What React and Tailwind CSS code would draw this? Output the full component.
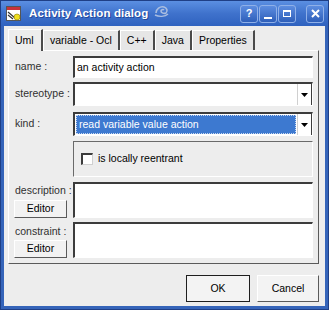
import React from "react";

// Raised / sunken borders in the old Qt style
const raised = "border-t border-l border-t-white border-l-white border-b border-r border-b-[#5a5a5a] border-r-[#5a5a5a]";
const sunken = "border-t-2 border-l-2 border-t-[#3c3c3c] border-l-[#3c3c3c] border-b border-r border-b-white border-r-white";

const TitleButton = ({ children, className = "" }) => (
  <div
    className={
      "w-[18px] h-[18px] rounded-[3px] border border-[#8fb0e8] bg-gradient-to-b from-[#5d8de0] to-[#2e5fba] flex items-center justify-center text-white " +
      className
    }
  >
    {children}
  </div>
);

const Arrow = () => (
  <div className="w-[15px] h-full bg-white border-l border-l-[#d0d0d0] border-r border-r-[#3c3c3c] flex items-center justify-center">
    <svg width="7" height="6" viewBox="0 0 7 6">
      <path d="M0 1h7L3.5 5z" fill="#000" />
    </svg>
  </div>
);

const Label = ({ children }) => (
  <div className="w-[59px] shrink-0 whitespace-nowrap text-[10.5px] text-[#303030] pl-[1px]">{children}</div>
);

const EditorButton = () => (
  <div className={"w-[53px] h-[18px] bg-[#f2f2f2] flex items-center justify-center text-[10.5px] text-black " + raised}>
    Editor
  </div>
);

export default function App() {
  const tabs = ["variable - Ocl", "C++", "Java", "Properties"];
  return (
    <div className="w-[329px] h-[310px] bg-[#3564b9] border border-[#1f3f86] flex flex-col font-['Liberation_Sans',Arial,sans-serif] select-none">
      {/* Barre de titre */}
      <div className="h-[25px] shrink-0 flex items-center bg-gradient-to-b from-[#5b8fe2] via-[#3f72cc] to-[#2f62bf] pl-[5px] pr-[4px]">
        <svg width="15" height="15" viewBox="0 0 15 15" className="shrink-0">
          <rect x="0.5" y="0.5" width="14" height="14" fill="#fff" stroke="#555" />
          <rect x="1" y="1" width="13" height="3" fill="#c8323a" />
          <path d="M2 6l7 6M2 9l5 4" stroke="#333" strokeWidth="1.2" />
          <circle cx="11" cy="11" r="3" fill="#f0e020" stroke="#8a7a00" strokeWidth="0.6" />
        </svg>
        <span className="ml-[8px] whitespace-nowrap text-white font-bold text-[11.5px] tracking-[0.1px] [text-shadow:1px_1px_0_#24479a]">
          Activity Action dialog
        </span>
        <svg width="16" height="14" viewBox="0 0 16 14" className="ml-[6px] -mt-[6px] shrink-0">
          <path d="M2 9c0-4 4-7 8-6 3 1 4 4 2 6-2 1-5 0-5-2 0-1 2-2 3-1" fill="none" stroke="#a9bde0" strokeWidth="1.6" />
          <path d="M1 11c4 2 10 2 13-1" fill="none" stroke="#a9bde0" strokeWidth="1.4" />
        </svg>
        <div className="flex-1" />
        <TitleButton>
          <span className="text-[11px] font-bold leading-none">?</span>
        </TitleButton>
        <TitleButton className="ml-[1px]">
          <div className="w-[8px] h-[2px] bg-white mt-[8px]" />
        </TitleButton>
        <TitleButton className="ml-[1px]">
          <div className="w-[8px] h-[7px] border border-white border-t-2" />
        </TitleButton>
        <TitleButton className="ml-[10px]">
          <svg width="9" height="9" viewBox="0 0 9 9">
            <path d="M1 1l7 7M8 1l-7 7" stroke="#fff" strokeWidth="2" />
          </svg>
        </TitleButton>
      </div>

      {/* Corps */}
      <div className="flex-1 mx-[3px] mb-[3px] bg-[#ededed] flex flex-col pl-[4px] pr-[6px] pt-[2px]">
        {/* Onglets */}
        <div className="flex items-end h-[22px] shrink-0">
          <div className="w-[35px] h-[22px] bg-[#ededed] border-t border-l border-t-white border-l-white border-r-2 border-r-[#4a4a4a] flex items-center pl-[6px] text-[10.5px] text-black -mb-[1px] relative z-10">
            Uml
          </div>
          {tabs.map((t) => (
            <div
              key={t}
              className="h-[20px] bg-[#e6e6e6] whitespace-nowrap border-t border-t-white border-l border-l-white border-r-2 border-r-[#4a4a4a] flex items-center px-[6px] text-[10.5px] text-black"
            >
              {t}
            </div>
          ))}
        </div>

        {/* Panneau */}
        <div className={"h-[214px] shrink-0 flex flex-col pl-[5px] pr-[5px] pt-[5px] " + raised}>
          {/* name */}
          <div className="flex items-center h-[22px]">
            <Label>name :</Label>
            <div className={"flex-1 h-full bg-white flex items-center pl-[2px] text-[10.5px] text-black " + sunken}>
              an activity action
            </div>
          </div>
          {/* stereotype */}
          <div className="flex items-center h-[24px] mt-[4px]">
            <Label>stereotype :</Label>
            <div className={"flex-1 h-full bg-white flex " + sunken}>
              <div className="flex-1" />
              <Arrow />
            </div>
          </div>
          {/* kind */}
          <div className="flex items-center h-[24px] mt-[6px]">
            <Label>kind :</Label>
            <div className={"flex-1 h-full bg-white flex " + sunken}>
              <div className="flex-1 m-[1px] bg-[#3d79d0] border border-dotted border-[#c8d8f0] flex items-center pl-[2px] text-[10.5px] text-white whitespace-nowrap">
                read variable value action
              </div>
              <Arrow />
            </div>
          </div>
          {/* groupe */}
          <div className="flex h-[36px] mt-[5px]">
            <div className="w-[59px] shrink-0" />
            <div className="flex-1 h-full border border-t-[#6a6a6a] border-l-[#6a6a6a] border-b-white border-r-white flex items-center pl-[7px]">
              <div className="w-[12px] h-[12px] bg-white border-t-2 border-l-2 border-t-[#3c3c3c] border-l-[#3c3c3c] border-b border-r border-b-[#d0d0d0] border-r-[#d0d0d0]" />
              <span className="ml-[5px] text-[10.5px] text-black whitespace-nowrap">is locally reentrant</span>
            </div>
          </div>
          {/* description */}
          <div className="flex h-[36px] mt-[5px]">
            <div className="w-[59px] shrink-0 flex flex-col justify-between">
              <div className="text-[10.5px] text-[#303030] pl-[1px] leading-[16px] whitespace-nowrap">description :</div>
              <EditorButton />
            </div>
            <div className={"flex-1 h-full bg-white " + sunken} />
          </div>
          {/* constraint */}
          <div className="flex h-[36px] mt-[4px]">
            <div className="w-[59px] shrink-0 flex flex-col justify-between">
              <div className="text-[10.5px] text-[#303030] pl-[1px] leading-[18px] whitespace-nowrap">constraint :</div>
              <EditorButton />
            </div>
            <div className={"flex-1 h-full bg-white " + sunken} />
          </div>
        </div>

        {/* Boutons */}
        <div className="flex justify-end mt-[11px]">
          <div className="w-[64px] h-[27px] border border-[#1e1e1e] bg-[#f3f3f3] flex items-center justify-center text-[10.5px] text-black">
            OK
          </div>
          <div className={"w-[62px] h-[27px] ml-[7px] bg-[#f3f3f3] flex items-center justify-center text-[10.5px] text-black " + raised}>
            Cancel
          </div>
        </div>
      </div>
    </div>
  );
}
